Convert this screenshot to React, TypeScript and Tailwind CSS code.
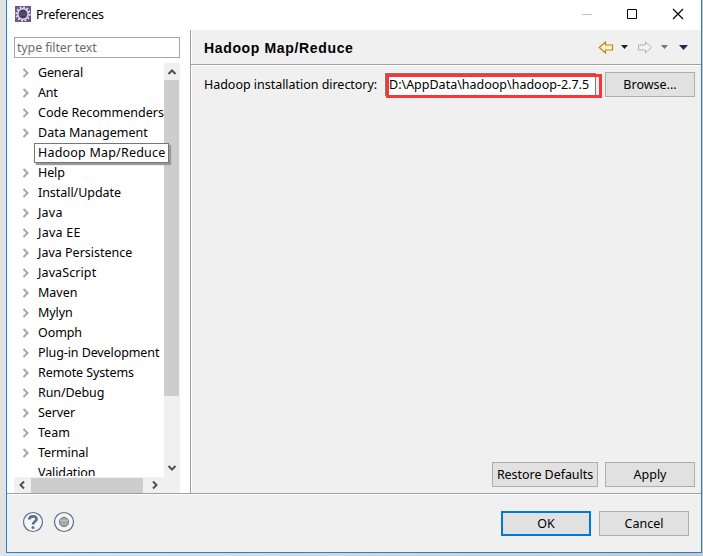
import type { ReactNode } from "react";

const items: [string, string][] = [
  ["General", "tracking-[-0.15px]"],
  ["Ant", "tracking-[-0.2px]"],
  ["Code Recommenders", ""],
  ["Data Management", ""],
  ["Hadoop Map/Reduce", "tracking-[0.2px]"],
  ["Help", "tracking-[-0.1px]"],
  ["Install/Update", "tracking-[-0.05px]"],
  ["Java", "tracking-[0.2px]"],
  ["Java EE", "tracking-[0.25px]"],
  ["Java Persistence", ""],
  ["JavaScript", "tracking-[0.1px]"],
  ["Maven", ""],
  ["Mylyn", "tracking-[-0.1px]"],
  ["Oomph", "tracking-[-0.1px]"],
  ["Plug-in Development", "tracking-[-0.1px]"],
  ["Remote Systems", "tracking-[-0.1px]"],
  ["Run/Debug", "tracking-[-0.1px]"],
  ["Server", "tracking-[-0.1px]"],
  ["Team", ""],
  ["Terminal", "tracking-[-0.1px]"],
  ["Validation", "tracking-[-0.1px]"],
];

function Chevron({ className, d, w = 2 }: { className: string; d: string; w?: number }) {
  return (
    <svg className={className} viewBox="0 0 10 10" fill="none" stroke="currentColor" strokeWidth={w}>
      <path d={d} />
    </svg>
  );
}

function Button({ children, className }: { children: ReactNode; className: string }) {
  return (
    <button className={`flex h-[25px] shrink-0 items-center justify-center whitespace-nowrap bg-[#e1e1e1] pt-px ${className}`}>
      {children}
    </button>
  );
}

function EclipseIcon() {
  return (
    <svg className="mb-0.5 size-4" viewBox="0 0 16 16">
      <rect width="16" height="16" fill="#6a568c" />
      <circle cx="8" cy="8" r="6.700" fill="none" stroke="#e4e2e8" strokeWidth="1.800" strokeDasharray="1.800 1.700" />
      <circle cx="8" cy="8" r="5.200" fill="#453a62" stroke="#e4e2e8" strokeWidth="1.500" />
      <path d="M4 7h8M4 9h8" stroke="#6a5f88" strokeWidth=".8" />
    </svg>
  );
}

function Arrow({ forward }: { forward?: boolean }) {
  return (
    <svg className="h-[13px] w-4 shrink-0" viewBox="0 0 16 13">
      {forward ? (
        <path d="M1.500 4H8.500V1L14.500 6.500L8.500 12V9H1.500Z" fill="#f4f4f4" stroke="#b0b0b0" />
      ) : (
        <path d="M14.500 4H7.500V1L1.200 6.500L7.500 12V9H14.500Z" fill="#fff3c4" stroke="#c08420" strokeWidth="1.200" />
      )}
    </svg>
  );
}

function Caret({ className }: { className: string }) {
  return (
    <svg className={className} viewBox="0 0 8 4" preserveAspectRatio="none" fill="currentColor">
      <path d="M0 0H8L4 4Z" />
    </svg>
  );
}

export default function App() {
  return (
    <div className="flex h-[556px] w-[703px] bg-linear-to-r from-[#e2e2e2] to-[#c8c8c8] pl-[6px] font-['Noto_Sans','Open_Sans',sans-serif] text-[12.5px] leading-5 text-black">
      <div className="flex h-[553px] w-[696px] flex-col border-x border-b border-[#1883d7] bg-[#f0f0f0]">
        <div className="flex h-[30px] shrink-0 items-center bg-white pl-2">
          <EclipseIcon />
          <span className="ml-[5px] tracking-[-0.15px]">Preferences</span>
          <svg className="mb-0.5 ml-auto h-3 w-[104px] shrink-0" viewBox="0 0 104 12" fill="none" stroke="#000">
            <path d="M1 6.500H11" stroke="#bdbdbd" />
            <path d="M46.500 1.500h9v9h-9z" />
            <path d="M92 1L102 11M102 1L92 11" strokeWidth="1.200" />
          </svg>
          <div className="w-4" />
        </div>
        <div className="flex h-[463px] shrink-0">
          <div className="h-full w-[183px] shrink-0 bg-white pl-[7px] pt-[7px]">
            <div className="flex h-[21px] w-[166px] items-center border border-[#a5a5a5] pl-[2px] tracking-[-0.15px] text-[#6d6d6d]">type filter text</div>
            <div className="mt-[5px] flex h-[414px] w-[166px]">
              <div className="h-[413px] w-[150px] overflow-x-visible overflow-y-clip">
                {items.map(([name, tracking], i) =>
                  i === 4 ? (
                    <div key={name} className="relative z-10 ml-5 flex h-5 w-[135px] items-center whitespace-nowrap border border-[#767676] bg-white pl-[3px] shadow-[2px_2px_1px_#999]">
                      <span className={tracking}>{name}</span>
                    </div>
                  ) : (
                    <div key={name} className="flex h-5 items-center whitespace-nowrap">
                      <span className="flex w-6 shrink-0 pl-[7px]">
                        {i < 20 && <Chevron className="size-[10px] text-[#a6a6a6]" d="M2.500 1L6.500 5L2.500 9" />}
                      </span>
                      <span className={tracking}>{name}</span>
                    </div>
                  ),
                )}
              </div>
              <div className="flex h-[414px] w-4 flex-col items-center bg-[#f0f0f0]">
                <div className="flex h-[17px] items-center"><Chevron className="size-[10px] text-[#505050]" d="M1.500 7L5 3.500L8.500 7" /></div>
                <div className="mr-px h-[316px] w-[15px] bg-[#cdcdcd]" />
                <div className="mb-px mt-auto flex h-[17px] items-center"><Chevron className="size-[10px] text-[#505050]" d="M1.500 3L5 6.500L8.500 3" /></div>
              </div>
            </div>
            <div className="flex h-[16px] w-[166px] items-center bg-[#f0f0f0]">
              <div className="flex w-[17px] pl-[3px]"><Chevron className="size-[10px] text-[#505050]" d="M7 1.500L3.500 5L7 8.500" /></div>
              <div className="h-[15px] w-[112px] bg-[#cdcdcd]" />
              <div className="ml-[7px]"><Chevron className="size-[10px] text-[#505050]" d="M3 1.500L6.500 5L3 8.500" /></div>
            </div>
          </div>
          <div className="flex h-full min-w-0 flex-1 flex-col border-l border-[#a0a0a0] shadow-[inset_1px_0_#fff]">
            <div className="flex h-[35px] shrink-0 items-center border-b border-[#a0a0a0] pl-[13px]">
              <h1 className="mt-0.5 whitespace-nowrap font-['Liberation_Sans',Arial,sans-serif] text-[14px] font-bold tracking-[0.65px]">Hadoop Map/Reduce</h1>
              <div className="ml-auto flex items-center pr-3">
                <Arrow />
                <Caret className="ml-[7px] h-1 w-[7px] text-[#222]" />
                <div className="ml-[9px]"><Arrow forward /></div>
                <Caret className="ml-[8px] h-1 w-[7px] text-[#777]" />
                <Caret className="ml-[11px] h-[5px] w-[9px] text-[#33204d]" />
                <div className="w-px" />
              </div>
            </div>
            <div className="h-px shrink-0 bg-white" />
            <div className="flex h-[31px] shrink-0 items-start pl-[13px] pt-[6px]">
              <span className="mt-[3px] w-[181px] whitespace-nowrap tracking-[-0.03px]">Hadoop installation directory:</span>
              <div className="relative mt-px flex h-[23px] w-[211px] items-center border border-[#7a7a7a] bg-white pl-[3px] pt-px">
                <span className="whitespace-nowrap">D:\AppData\hadoop\hadoop-2.7.5</span>
                <div className="absolute left-0 top-0 h-6 w-[216px] border-3 border-[#fb3434]" />
              </div>
              <Button className="ml-[9px] w-[90px] border border-[#adadad]">Browse...</Button>
            </div>
            <div className="mt-auto flex justify-end gap-[7px] pb-[6px] pr-[6px]">
              <Button className="w-[106px] border border-[#adadad] tracking-[-0.05px]">Restore Defaults</Button>
              <Button className="w-[90px] border border-[#adadad]">Apply</Button>
            </div>
          </div>
        </div>
        <div className="flex min-h-0 flex-1 items-start border-t border-[#a0a0a0] pl-[15px] pt-[17px] shadow-[inset_0_1px_#fff]">
          <svg className="size-[22px]" viewBox="0 0 22 22" fill="none">
            <circle cx="11" cy="11" r="9.500" fill="#f5f6f8" stroke="#5c6e90" strokeWidth="1.200" />
            <path d="M7.300 8.500C7.300 4.300 14.600 4.300 14.600 8C14.600 10.500 11 10.500 11 13.500" stroke="#5c6e90" strokeWidth="2.700" />
            <circle cx="11" cy="16.500" r="1.500" fill="#5c6e90" />
          </svg>
          <svg className="ml-[9px] size-[22px]" viewBox="0 0 22 22">
            <circle cx="11" cy="11" r="9.500" fill="#f5f6f8" stroke="#5c6e90" strokeWidth="1.200" />
            <circle cx="11" cy="11" r="4.700" fill="#a8a8a8" stroke="#7c7c7c" />
            <path d="M7.500 9.500h7" stroke="#c4c4c4" />
          </svg>
          <div className="ml-auto flex gap-2 pr-3">
            <Button className="w-[90px] border-2 border-[#0078d7]">OK</Button>
            <Button className="w-[90px] border border-[#adadad]">Cancel</Button>
          </div>
        </div>
      </div>
    </div>
  );
}
